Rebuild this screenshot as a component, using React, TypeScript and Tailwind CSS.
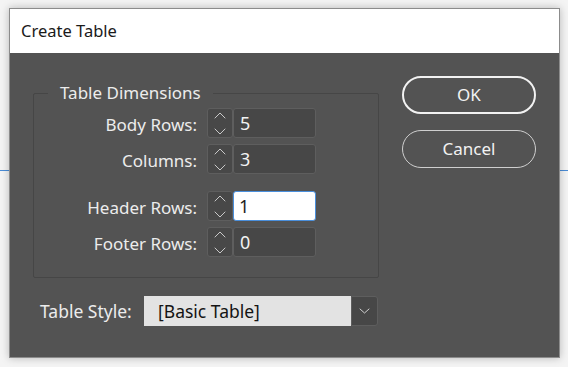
import React from 'react';

const labelClass = 'text-[17px] leading-none text-[#ececec]';

function Chevron({ up }: { up?: boolean }): React.ReactElement {
  return (
    <svg width="12" height="7" viewBox="0 0 12 7" fill="none">
      <path
        d={up ? 'M1 6L6 1L11 6' : 'M1 1L6 6L11 1'}
        stroke="#c9c9c9"
        strokeWidth="1"
        strokeLinecap="round"
        strokeLinejoin="round"
      />
    </svg>
  );
}

interface SpinRowProps {
  label: string;
  value: string;
  focused?: boolean;
  className?: string;
}

function SpinRow({ label, value, focused, className = '' }: SpinRowProps): React.ReactElement {
  return (
    <div className={`flex items-center h-[30px] ${className}`}>
      <span className={`w-[163px] text-right pt-[2px] ${labelClass}`}>{label}</span>
      <div className="ml-[10px] w-[26px] h-full flex flex-col items-center justify-center gap-[9px] bg-[#484848] border border-[#5e5e5e] rounded-[3px]">
        <Chevron up />
        <Chevron />
      </div>
      {focused ? (
        <div className="w-[83px] h-full flex items-center pl-[5px] bg-white border-[1.5px] border-[#4a8fdc] rounded-[3px] text-[18px] text-[#1e1e1e]">
          {value}
        </div>
      ) : (
        <div className="w-[83px] h-full flex items-center pl-[6px] bg-[#474747] border border-[#5e5e5e] rounded-[3px] text-[18px] text-[#f2f2f2]">
          {value}
        </div>
      )}
    </div>
  );
}

export default function App(): React.ReactElement {
  return (
    <div className="relative min-h-screen w-full bg-[#f4f4f4] pt-[8px] pl-[9px] font-['Noto_Sans',sans-serif]">
      <div className="absolute left-0 right-0 top-[170px] h-px bg-[#4a8cd6]" />

      <div className="relative w-[551px] h-[350px] flex flex-col border border-[#8c8c8c] shadow-[0_0_8px_rgba(0,0,0,0.25)]">
        <div className="h-[44px] bg-white flex items-center pl-[11px] text-[16.5px] text-[#1a1a1a]">
          Create Table
        </div>

        <div className="flex-1 bg-[#535353] flex items-start pl-[23px]">
          <div className="flex flex-col">
            <fieldset className="mt-[27px] w-[346px] h-[198px] border border-[#464646] rounded-[2px]">
              <legend className="ml-[14px] px-[12px] text-[17px] leading-[26px] text-[#ececec]">
                Table Dimensions
              </legend>
              <SpinRow label="Body Rows:" value="5" className="mt-[2px]" />
              <SpinRow label="Columns:" value="3" className="mt-[6px]" />
              <SpinRow label="Header Rows:" value="1" focused className="mt-[17px]" />
              <SpinRow label="Footer Rows:" value="0" className="mt-[6px]" />
            </fieldset>

            <div className="mt-[18px] ml-[7px] flex items-center h-[30px]">
              <span className={`w-[104px] pt-[2px] text-[17.5px] leading-none text-[#ececec]`}>Table Style:</span>
              <div className="w-[207px] h-full flex items-center pl-[14px] bg-[#e3e3e3] text-[17.5px] text-[#141414]">
                [Basic Table]
              </div>
              <div className="w-[27px] h-full flex items-center justify-center bg-[#474747] border border-[#5e5e5e] rounded-r-[3px]">
                <svg width="11" height="6" viewBox="0 0 11 6" fill="none">
                  <path d="M1 1L5.5 5L10 1" stroke="#d0d0d0" strokeWidth="1" strokeLinecap="round" />
                </svg>
              </div>
            </div>
          </div>

          <div className="ml-[23px] mt-[23px] w-[134px] flex flex-col">
            <button className="h-[38px] rounded-full border-2 border-[#f2f2f2] text-[17px] text-[#f2f2f2]">
              OK
            </button>
            <button className="mt-[16px] h-[38px] rounded-full border border-[#cfcfcf] text-[17px] text-[#f2f2f2]">
              Cancel
            </button>
          </div>
        </div>
      </div>
    </div>
  );
}
